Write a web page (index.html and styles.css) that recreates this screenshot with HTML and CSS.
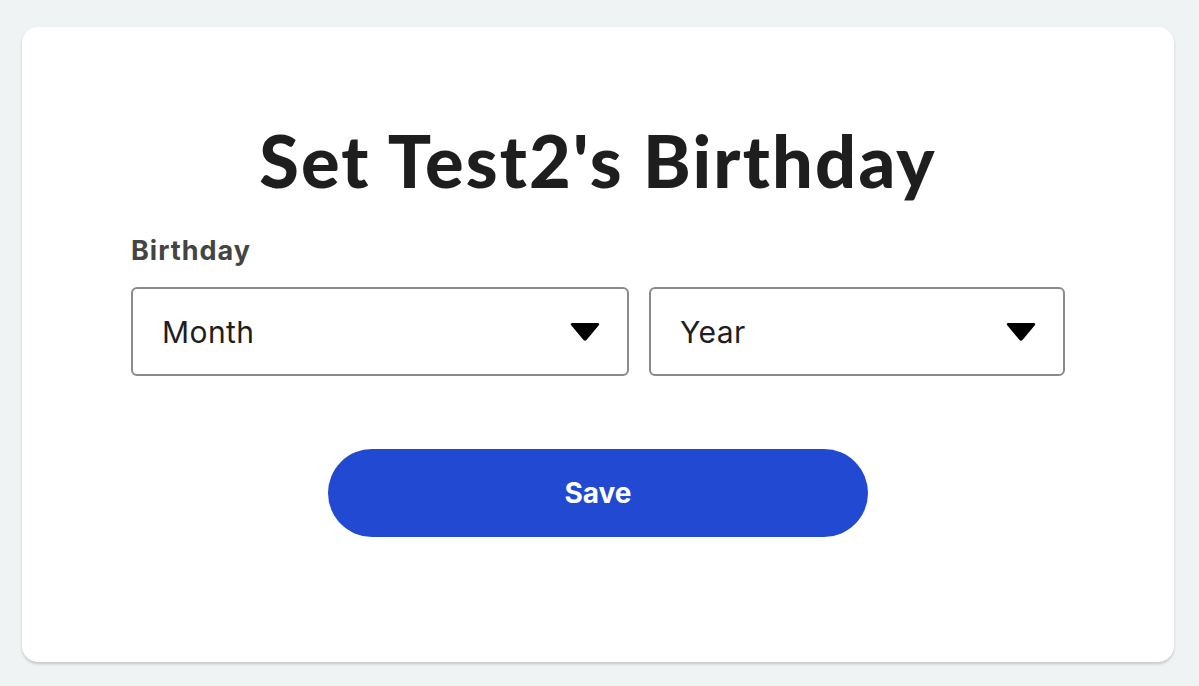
FILE: index.html
```html
<!DOCTYPE html>
<html lang="en">
<head>
<meta charset="utf-8">
<title>Set Birthday</title>
<link rel="stylesheet" href="styles.css">
</head>
<body>
<main class="page">
  <section class="card">
    <h1 class="title">Set Test2's Birthday</h1>
    <form class="form">
      <label class="label">Birthday</label>
      <div class="selects">
        <div class="select month">
          <span class="select-text">Month</span>
          <svg class="arrow" width="30" height="18" viewBox="0 0 30 18"><path d="M1 2 Q0 0 2.5 0 L27.5 0 Q30 0 29 2 L16.5 17 Q15 18.5 13.5 17 Z" fill="#000"/></svg>
        </div>
        <div class="select year">
          <span class="select-text">Year</span>
          <svg class="arrow" width="30" height="18" viewBox="0 0 30 18"><path d="M1 2 Q0 0 2.5 0 L27.5 0 Q30 0 29 2 L16.5 17 Q15 18.5 13.5 17 Z" fill="#000"/></svg>
        </div>
      </div>
      <div class="actions">
        <button type="button" class="save">Save</button>
      </div>
    </form>
  </section>
</main>
</body>
</html>
```
FILE: styles.css
```css
html, body {
  margin: 0;
  padding: 0;
  background: #eff3f3;
}
.page {
  padding: 27px 25px 24px 22px;
}
.card {
  background: #ffffff;
  border-radius: 16px;
  box-shadow: 0 2px 3px rgba(0,0,0,0.18);
  height: 635px;
  box-sizing: border-box;
  padding: 90px 0 0;
  display: flex;
  flex-direction: column;
  align-items: center;
}
.title {
  margin: 0;
  font-family: "Lato", sans-serif;
  font-weight: 900;
  font-size: 72px;
  line-height: 86px;
  color: #1e1e1e;
  letter-spacing: 2.2px;
}
.form {
  width: 934px;
  margin-top: 32px;
}
.label {
  display: block;
  font-family: "Inter", sans-serif;
  font-weight: 700;
  font-size: 27px;
  line-height: 32px;
  letter-spacing: 1px;
  color: #444444;
}
.selects {
  display: flex;
  gap: 20px;
  margin-top: 20px;
}
.select {
  height: 89px;
  box-sizing: border-box;
  border: 2px solid #8a8a8a;
  border-radius: 6px;
  display: flex;
  align-items: center;
  justify-content: space-between;
  padding: 0 27px 0 29px;
}
.month { flex: 0 0 498px; }
.year { flex: 0 0 416px; }
.select-text {
  font-family: "Inter", sans-serif;
  font-size: 30px;
  letter-spacing: 0.4px;
  color: #1e1e1e;
}
.arrow { display: block; }
.actions {
  display: flex;
  justify-content: center;
  margin-top: 73px;
}
.save {
  width: 540px;
  height: 88px;
  border: none;
  border-radius: 44px;
  background: #2149d1;
  color: #ffffff;
  font-family: "Inter", sans-serif;
  font-weight: 700;
  font-size: 28px;
}
```
